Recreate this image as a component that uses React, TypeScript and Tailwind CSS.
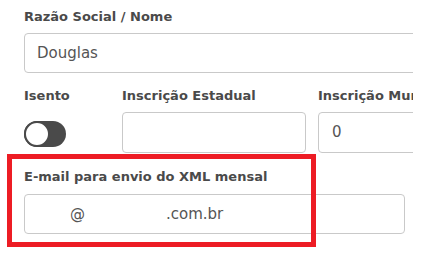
export default function App() {
  const font = { fontFamily: '"DejaVu Sans", "Open Sans", sans-serif' };
  return (
    <div className="w-[444px] h-[256px] bg-white relative overflow-hidden" style={font}>
      <div className="w-[413px] overflow-hidden pl-[24px] pt-[8px]">
        <div className="text-[13px] leading-[18px] font-bold text-[#4a4a4a]">Razão Social / Nome</div>
        <div className="mt-[7px] w-[420px] h-[40px] border border-[#c9c9c9] rounded-[4px] flex items-center pl-[12px] text-[15px] text-[#555555]">
          Douglas
        </div>
        <div className="flex mt-[14px] w-[500px]">
          <div className="w-[98px] shrink-0 flex flex-col">
            <div className="text-[13px] leading-[18px] font-bold text-[#4a4a4a]">Isento</div>
            <div className="mt-[16px] w-[42px] h-[26px] rounded-full bg-[#4a4a4a] relative">
              <div className="absolute left-0 top-0 w-[26px] h-[26px] rounded-full bg-white border-[2px] border-[#4a4a4a]" />
            </div>
          </div>
          <div className="w-[184px] shrink-0">
            <div className="text-[13px] leading-[18px] font-bold text-[#4a4a4a] whitespace-nowrap">Inscrição Estadual</div>
            <div className="mt-[7px] h-[41px] border border-[#c9c9c9] rounded-[4px]" />
          </div>
          <div className="w-[190px] shrink-0 ml-[12px]">
            <div className="text-[13px] leading-[18px] font-bold text-[#4a4a4a] whitespace-nowrap">Inscrição Municipal</div>
            <div className="mt-[7px] h-[41px] border border-[#c9c9c9] rounded-[4px] flex items-center pl-[13px] text-[15px] text-[#555555]">0</div>
          </div>
        </div>
        <div className="mt-[15px] text-[13px] leading-[18px] font-bold text-[#4a4a4a]">E-mail para envio do XML mensal</div>
        <div className="mt-[8px] w-[381px] h-[40px] border border-[#c9c9c9] rounded-[4px] flex items-center text-[15px] text-[#555555]">
          <span className="ml-[45px]">@</span>
          <span className="ml-[81px]">.com.br</span>
        </div>
      </div>
      <div className="absolute left-[7px] top-[154px] w-[309px] h-[93px] border-[5px] border-[#ed1c24]" />
    </div>
  );
}
